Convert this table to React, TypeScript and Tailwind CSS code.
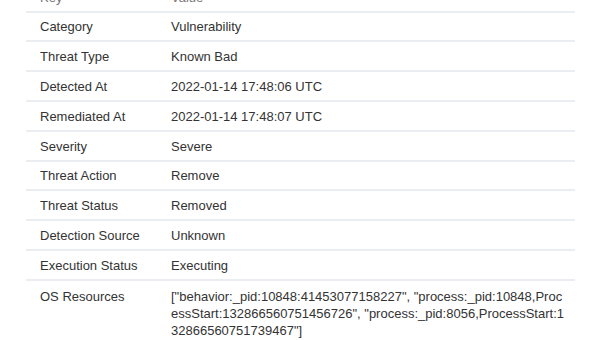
import React from 'react';

const rows: { key: string; value: string; h: string }[] = [
  { key: 'Category', value: 'Vulnerability', h: 'h-[29px]' },
  { key: 'Threat Type', value: 'Known Bad', h: 'h-[30px]' },
  { key: 'Detected At', value: '2022-01-14 17:48:06 UTC', h: 'h-[30px]' },
  { key: 'Remediated At', value: '2022-01-14 17:48:07 UTC', h: 'h-[30px]' },
  { key: 'Severity', value: 'Severe', h: 'h-[30px]' },
  { key: 'Threat Action', value: 'Remove', h: 'h-[29px]' },
  { key: 'Threat Status', value: 'Removed', h: 'h-[30px]' },
  { key: 'Detection Source', value: 'Unknown', h: 'h-[30px]' },
  { key: 'Execution Status', value: 'Executing', h: 'h-[30px]' },
];

const osResources =
  '["behavior:_pid:10848:41453077158227", "process:_pid:10848,ProcessStart:132866560751456726", "process:_pid:8056,ProcessStart:132866560751739467"]';

export default function App() {
  return (
    <div className="w-[600px] h-[340px] overflow-hidden bg-white font-['Liberation_Sans',Arial,sans-serif] text-[13px] leading-[17px] text-[#333]">
      <div className="ml-[26px] w-[549px] -mt-[17px]">
        {/* Header */}
        <div className="flex items-center h-[28px] text-[#777]">
          <div className="w-[131px] shrink-0 pl-[14px]">Key</div>
          <div className="pl-[14px]">Value</div>
        </div>

        {/* Rows */}
        {rows.map(r => (
          <div key={r.key} className={`flex items-center border-t-2 border-[#eaeef2] ${r.h}`}>
            <div className="w-[131px] shrink-0 pl-[14px]">{r.key}</div>
            <div className="flex-1 pl-[14px] pr-[9px]">{r.value}</div>
          </div>
        ))}

        <div className="flex border-t-2 border-[#eaeef2] pt-[7px] pb-[8px]">
          <div className="w-[131px] shrink-0 pl-[14px]">OS Resources</div>
          <div className="flex-1 pl-[14px] pr-[9px] break-all">{osResources}</div>
        </div>
      </div>
    </div>
  );
}
